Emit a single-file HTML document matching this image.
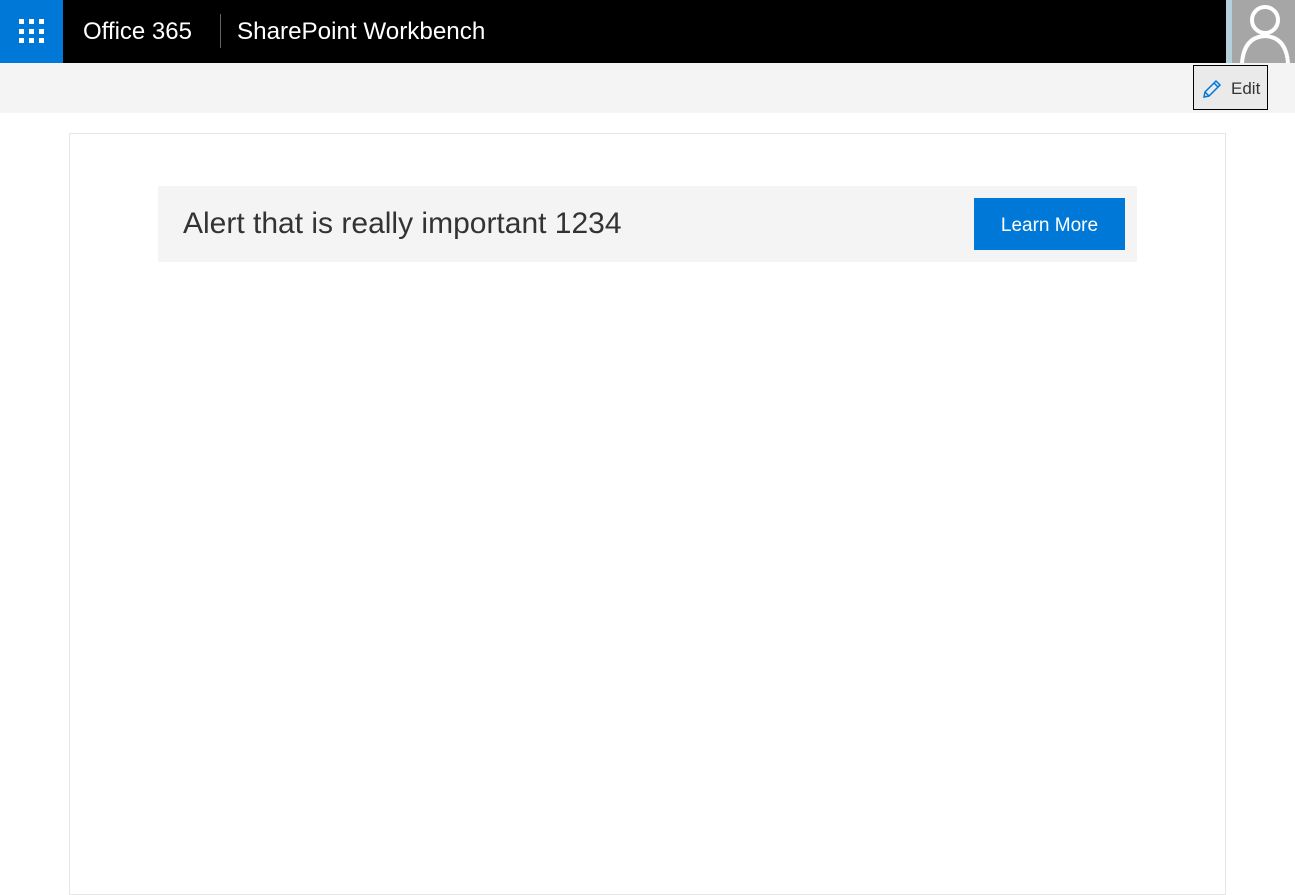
<!DOCTYPE html>
<html><head><style>
body{margin:0;width:1295px;height:838px;overflow:hidden;background:#fff;font-family:"Segoe UI","Liberation Sans",sans-serif;position:relative}
.hdr{position:absolute;left:0;top:0;width:1295px;height:63px;background:#000}
.waf{position:absolute;left:0;top:0;width:63px;height:63px;background:#0078d7}
.d{position:absolute;width:5px;height:5px;background:#fff}
.t{position:absolute;color:#fff;font-size:24px;top:18px;white-space:nowrap}
.sep{position:absolute;left:220px;top:14px;width:1px;height:34px;background:#666}
.av{position:absolute;left:1226px;top:0;width:69px;height:63px;background:#a6a6a6;border-left:6px solid #b5cfdc;box-sizing:border-box}
.bar{position:absolute;left:0;top:63px;width:1295px;height:50px;background:#f4f4f4}
.edit{position:absolute;left:1193px;top:65px;width:73px;height:43px;border:1px solid #000;background:#eaeaea;font-size:17px;color:#333}
.canvas{position:absolute;left:69px;top:133px;width:1155px;height:760px;border:1px solid #e6e6e6}
.alert{position:absolute;left:158px;top:186px;width:979px;height:76px;background:#f4f4f4}
.alert span{position:absolute;left:25px;top:21px;font-size:30px;color:#333;white-space:nowrap}
.btn{position:absolute;left:974px;top:198px;width:151px;height:52px;background:#0078d7;color:#fff;font-size:19px;text-align:center;line-height:56px}
</style></head><body>
<div class="hdr">
<div class="waf">
<div class="d" style="left:19px;top:19px"></div><div class="d" style="left:29px;top:19px"></div><div class="d" style="left:39px;top:19px"></div>
<div class="d" style="left:19px;top:29px"></div><div class="d" style="left:29px;top:29px"></div><div class="d" style="left:39px;top:29px"></div>
<div class="d" style="left:19px;top:38px"></div><div class="d" style="left:29px;top:38px"></div><div class="d" style="left:39px;top:38px"></div>
</div>
<div class="t" style="left:83px">Office 365</div>
<div class="sep"></div>
<div class="t" style="left:237px;font-size:24.2px">SharePoint Workbench</div>
<div class="av"><svg width="63" height="63" viewBox="0 0 63 63" style="position:absolute;left:0;top:0"><circle cx="33" cy="20" r="13" fill="none" stroke="#fff" stroke-width="4"/><path d="M10 63 Q12 37 33 36 Q54 37 56 63" fill="none" stroke="#fff" stroke-width="4"/></svg></div>
</div>
<div class="bar"></div>
<div class="edit"><svg width="22" height="22" viewBox="0 0 22 22" style="position:absolute;left:7px;top:12px"><path d="M3 19 L4 14 L15 3 L19 7 L8 18 Z M13 5 L17 9 M4 14 L8 18" fill="none" stroke="#0078d7" stroke-width="1.5"/></svg><span style="position:absolute;left:37px;top:13px">Edit</span></div>
<div class="canvas"></div>
<div class="alert"><span>Alert that is really important 1234</span></div>
<div class="btn">Learn More</div>
</body></html>
